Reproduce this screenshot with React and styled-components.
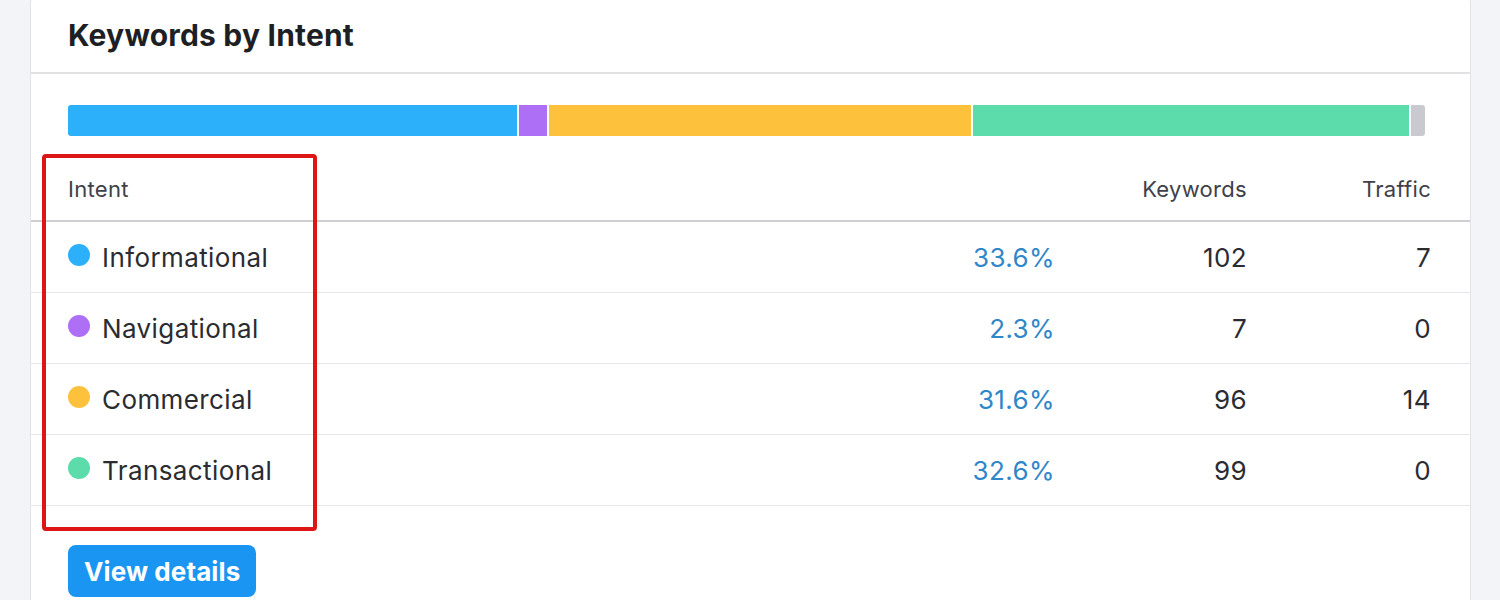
import React from 'react';
import styled, { createGlobalStyle } from 'styled-components';

const GlobalStyle = createGlobalStyle`
  html, body {
    margin: 0;
    padding: 0;
    background: #f3f4f8;
    font-family: Inter, 'Liberation Sans', sans-serif;
    overflow: hidden;
  }
`;

const Page = styled.div`
  position: relative;
  width: 1500px;
  height: 600px;
  overflow: hidden;
`;

const Card = styled.section`
  margin: -10px 0 0 30px;
  width: 1439px;
  height: 640px;
  background: #fff;
  border: 1px solid #e1e3e8;
  border-radius: 12px;
`;

const Header = styled.header`
  height: 83px;
  padding: 0 37px;
  display: flex;
  align-items: center;
  box-sizing: border-box;
  border-bottom: 2px solid #e2e2e4;
`;

const Title = styled.h2`
  margin: 6px 0 0;
  font-size: 30px;
  font-weight: 700;
  color: #1d1f24;
  letter-spacing: 0.2px;
`;

const Bar = styled.div`
  display: flex;
  gap: 2px;
  height: 31px;
  margin: 31px 45px 0 37px;
  border-radius: 3px;
  overflow: hidden;
`;

const Segment = styled.div`
  flex: ${({ $grow }) => $grow} 0 0;
  background: ${({ $color }) => $color};
`;

const Grid = styled.div`
  display: grid;
  grid-template-columns: 1fr 120px 192px 184px;
  align-items: center;
  padding: 0 39px 0 37px;
`;

const HeadRow = styled(Grid)`
  height: 86px;
  align-items: end;
  padding-bottom: 18px;
  box-sizing: border-box;
  border-bottom: 2px solid #cfd0d4;
  font-size: 22px;
  letter-spacing: 0.3px;
  color: #3e4148;
`;

const Row = styled(Grid)`
  height: 71px;
  box-sizing: border-box;
  border-bottom: 1px solid #e6e7ea;
  font-size: 26px;
  letter-spacing: 0.4px;
  color: #2a2c31;
`;

const NameCell = styled.div`
  display: flex;
  align-items: center;
  gap: 12px;
`;

const Dot = styled.span`
  width: 22px;
  height: 22px;
  border-radius: 50%;
  background: ${({ $color }) => $color};
  margin-top: -4px;
`;

const Num = styled.div`
  text-align: right;
  color: ${({ $link }) => ($link ? '#2f86c8' : 'inherit')};
`;

const Footer = styled.div`
  padding: 39px 37px 0;
`;

const Button = styled.button`
  height: 52px;
  padding: 0 16px;
  border: none;
  border-radius: 8px;
  background: #1b95f2;
  color: #fff;
  font-family: inherit;
  font-size: 26px;
  font-weight: 700;
  letter-spacing: 0.1px;
  cursor: pointer;
`;

const Highlight = styled.div`
  position: absolute;
  left: 42px;
  top: 154px;
  width: 275px;
  height: 377px;
  box-sizing: border-box;
  border: 4px solid #dd1515;
  border-radius: 4px;
  pointer-events: none;
`;

const intents = [
  { name: 'Informational', color: '#2cb0fa', pct: '33.6%', keywords: 102, traffic: 7, bar: 449 },
  { name: 'Navigational', color: '#ad6ff5', pct: '2.3%', keywords: 7, traffic: 0, bar: 28 },
  { name: 'Commercial', color: '#fdc13c', pct: '31.6%', keywords: 96, traffic: 14, bar: 422 },
  { name: 'Transactional', color: '#5bdcaa', pct: '32.6%', keywords: 99, traffic: 0, bar: 436 },
];

const App = () => (
  <Page>
    <GlobalStyle />
    <Card>
      <Header>
        <Title>Keywords by Intent</Title>
      </Header>
      <Bar>
        {intents.map((i) => (
          <Segment key={i.name} $grow={i.bar} $color={i.color} />
        ))}
        <Segment $grow={14} $color="#c9cacf" />
      </Bar>
      <HeadRow>
        <div>Intent</div>
        <div />
        <Num>Keywords</Num>
        <Num>Traffic</Num>
      </HeadRow>
      {intents.map((i) => (
        <Row key={i.name}>
          <NameCell>
            <Dot $color={i.color} />
            {i.name}
          </NameCell>
          <Num $link>{i.pct}</Num>
          <Num>{i.keywords}</Num>
          <Num>{i.traffic}</Num>
        </Row>
      ))}
      <Footer>
        <Button>View details</Button>
      </Footer>
    </Card>
    <Highlight />
  </Page>
);

export default App;
